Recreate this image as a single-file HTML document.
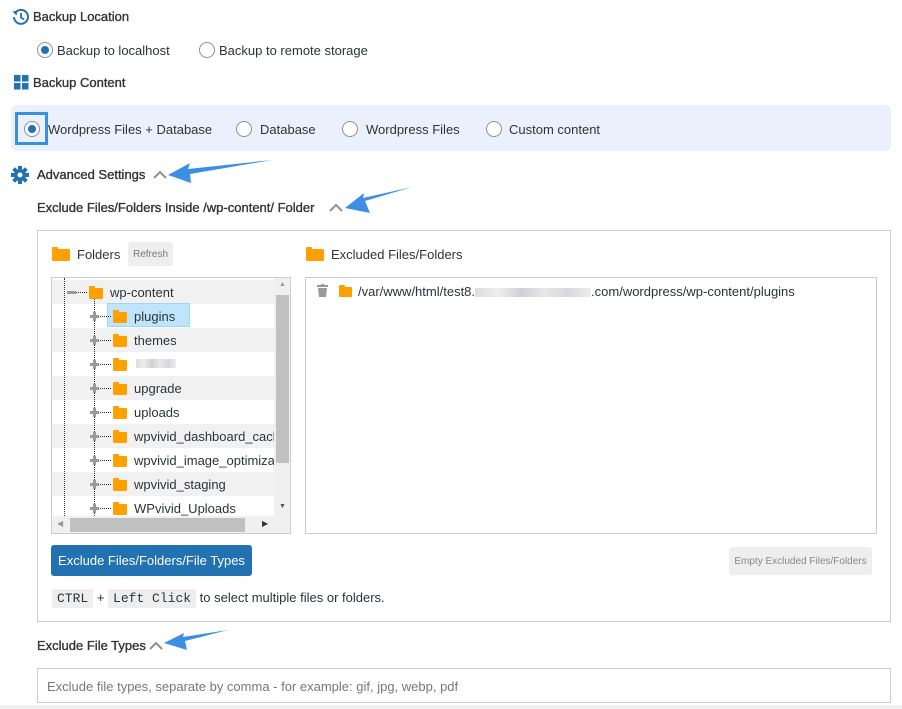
<!DOCTYPE html>
<html><head><meta charset="utf-8"><style>
*{box-sizing:border-box;margin:0;padding:0}
body{width:902px;height:709px;background:#fff;font-family:"Liberation Sans",sans-serif;font-size:13px;color:#2c3338;position:relative;overflow:hidden}
.a{position:absolute;white-space:nowrap}
.r{position:absolute;width:16px;height:16px;border:1px solid #8c8f94;border-radius:50%;background:#fff}
.r.on::after{content:"";position:absolute;left:3px;top:3px;width:8px;height:8px;border-radius:50%;background:#2271b1}
.b{color:#333;-webkit-text-stroke:0.35px #333}
.row{position:absolute;left:0;width:222px;height:24px}
.fo{position:absolute;width:14px;height:11px;background:#ffa000;border-radius:1px}
.fo::before{content:"";position:absolute;left:0;top:-2px;width:6px;height:3px;background:#ffa000;border-radius:1px 1px 0 0}
.kbd{background:#eee;font-family:"Liberation Mono",monospace;font-size:13px;padding:2px 5px}
.blur{display:inline-block;height:9px;background:linear-gradient(90deg,#ddd,#eee,#cfcfd8,#e8e8e8,#d6d6dd,#eee);vertical-align:middle}
.btn{display:flex;align-items:center;justify-content:center}
</style></head><body>
<svg class="a" style="left:12px;top:8px" width="18" height="18" viewBox="0 0 18 18"><path d="M3.5 4.5A7 7 0 1 1 2 9" fill="none" stroke="#2271b1" stroke-width="2"/><path d="M0.5 3.5L4.5 7.5L5.5 2.5z" fill="#2271b1"/><path d="M9 5v4.5l3 2" fill="none" stroke="#2271b1" stroke-width="1.8"/></svg>
<div class="a b" style="left:33px;top:9px">Backup Location</div>
<div class="r on" style="left:37px;top:42px"></div><div class="a" style="left:57px;top:43px">Backup to localhost</div>
<div class="r" style="left:199px;top:42px"></div><div class="a" style="left:219px;top:43px">Backup to remote storage</div>
<svg class="a" style="left:14px;top:75px" width="15" height="15"><rect x="0" y="0" width="6.5" height="6.5" fill="#2271b1"/><rect x="8" y="0" width="6.5" height="6.5" fill="#2271b1"/><rect x="0" y="8" width="6.5" height="6.5" fill="#2271b1"/><rect x="8" y="8" width="6.5" height="6.5" fill="#2271b1"/></svg>
<div class="a b" style="left:33px;top:75px">Backup Content</div>
<div class="a" style="left:11px;top:105px;width:880px;height:46px;background:#ebf1fc;border-radius:6px"></div>
<div class="a" style="left:15px;top:112px;width:33px;height:33px;border:3px solid #3b8fe0"></div>
<div class="r on" style="left:24px;top:121px"></div><div class="a" style="left:48px;top:122px">Wordpress Files + Database</div>
<div class="r" style="left:236px;top:121px"></div><div class="a" style="left:260px;top:122px">Database</div>
<div class="r" style="left:342px;top:121px"></div><div class="a" style="left:366px;top:122px">Wordpress Files</div>
<div class="r" style="left:486px;top:121px"></div><div class="a" style="left:509px;top:122px">Custom content</div>
<svg class="a" style="left:11px;top:166px" width="18" height="18" viewBox="0 0 18 18"><g fill="#2271b1"><circle cx="9" cy="9" r="6"/><rect x="7" y="0" width="4" height="18"/><rect x="0" y="7" width="18" height="4"/><rect x="7" y="0" width="4" height="18" transform="rotate(45 9 9)"/><rect x="7" y="0" width="4" height="18" transform="rotate(-45 9 9)"/></g><circle cx="9" cy="9" r="2.5" fill="#fff"/></svg>
<div class="a b" style="left:37px;top:167px">Advanced Settings</div>
<svg class="a" style="left:0;top:0" width="902" height="709">
<g fill="none" stroke="#8c8f94" stroke-width="2"><path d="M154 178l6-6 6 6"/><path d="M330 211l6-6 6 6"/><path d="M150 649l6-6 6 6"/></g>
<g fill="#3d8fe6"><path d="M168 175L190 163L188 169L272 160L190 174L191 183z"/><path d="M345 208L364 193L363 198L412 187L365 201L370 213z"/><path d="M164 643L184 633L183 637L228 630L185 641L187 650z"/></g>
</svg>
<div class="a b" style="left:37px;top:200px">Exclude Files/Folders Inside /wp-content/ Folder</div>
<div class="a" style="left:37px;top:230px;width:854px;height:392px;border:1px solid #ccc"></div>
<div class="fo" style="left:52px;top:249px;width:18px;height:12px"></div>
<div class="a" style="left:77px;top:247px;color:#333">Folders</div>
<div class="a btn" style="left:128px;top:242px;width:45px;height:24px;background:#eee;border-radius:3px;font-size:10px;color:#777">Refresh</div>
<div class="a" style="left:51px;top:277px;width:240px;height:257px;border:1px solid #ccc;overflow:hidden">
 <div style="position:absolute;left:0;top:2px;width:222px">
  <div class="row" style="top:0;background:#f1f1f1"></div>
  <div class="row" style="top:48px;background:#f1f1f1"></div>
  <div class="row" style="top:96px;background:#f1f1f1"></div>
  <div class="row" style="top:144px;background:#f1f1f1"></div>
  <div class="row" style="top:192px;background:#f1f1f1"></div>
 </div>
 <div class="a" style="left:12px;top:0;height:240px;border-left:1px dotted #333"></div>
 <div class="a" style="left:42px;top:20px;height:220px;border-left:1px dotted #333"></div>
 <div class="a" style="left:15px;top:14px;width:20px;border-top:1px dotted #333"></div>
 <div class="a" style="left:15px;top:13px;width:9px;height:3px;background:#999"></div>
 <div class="fo" style="left:37px;top:10px"></div><div class="a" style="left:58px;top:7px">wp-content</div>
 <div class="a" style="left:55px;top:25px;width:83px;height:24px;background:#bee5fb;border:1px solid #9dd6f8"></div>
 <div id="t"></div>
 <div class="a" style="left:222px;top:0;width:17px;height:238px;background:#f0f0f0"></div>
 <div class="a" style="left:224px;top:17px;width:13px;height:168px;background:#c1c1c1"></div>
 <div class="a" style="left:227px;top:3px;font-size:7px;color:#999">▲</div>
 <div class="a" style="left:227px;top:225px;font-size:7px;color:#555">▼</div>
 <div class="a" style="left:0;top:238px;width:239px;height:18px;background:#f0f0f0"></div>
 <div class="a" style="left:18px;top:240px;width:175px;height:14px;background:#c1c1c1"></div>
 <div class="a" style="left:5px;top:241px;font-size:8px;color:#999">◀</div>
 <div class="a" style="left:210px;top:241px;font-size:8px;color:#333">▶</div>
</div>
<script>
var n=["plugins","themes","","upgrade","uploads","wpvivid_dashboard_cache","wpvivid_image_optimization","wpvivid_staging","WPvivid_Uploads"],h="";
for(var i=0;i<n.length;i++){var y=26+24*i;
h+='<div class="a" style="left:42px;top:'+(y+12)+'px;width:17px;border-top:1px dotted #333"></div>';
h+='<div class="a" style="left:38px;top:'+(y+11)+'px;width:9px;height:3px;background:#999"></div><div class="a" style="left:41px;top:'+(y+8)+'px;width:3px;height:9px;background:#999"></div>';
h+='<div class="fo" style="left:61px;top:'+(y+8)+'px"></div>';
h+=n[i]?'<div class="a" style="left:82px;top:'+(y+5)+'px">'+n[i]+'</div>':'<div class="a blur" style="left:84px;top:'+(y+7)+'px;width:40px"></div>';}
document.getElementById("t").outerHTML=h;
</script>
<div class="fo" style="left:306px;top:249px;width:18px;height:12px"></div>
<div class="a" style="left:331px;top:247px;color:#333">Excluded Files/Folders</div>
<div class="a" style="left:305px;top:277px;width:572px;height:257px;border:1px solid #ccc"></div>
<svg class="a" style="left:317px;top:284px" width="11" height="13"><rect x="0" y="1" width="11" height="2" fill="#999"/><rect x="4" y="0" width="3" height="2" fill="#999"/><path d="M1 4h9l-1 9H2z" fill="#999"/></svg>
<div class="fo" style="left:339px;top:287px;width:13px;height:10px"></div>
<div class="a" style="left:358px;top:284px">/var/www/html/test8.<span class="blur" style="width:116px"></span>.com/wordpress/wp-content/plugins</div>
<div class="a btn" style="left:51px;top:545px;width:201px;height:31px;background:#2271b1;border-radius:3px;color:#fff">Exclude Files/Folders/File Types</div>
<div class="a btn" style="left:729px;top:547px;width:143px;height:28px;background:#eee;border-radius:3px;color:#888;font-size:10px">Empty Excluded Files/Folders</div>
<div class="a" style="left:52px;top:590px"><span class="kbd">CTRL</span> + <span class="kbd">Left Click</span> to select multiple files or folders.</div>
<div class="a b" style="left:37px;top:638px">Exclude File Types</div>
<div class="a" style="left:37px;top:668px;width:854px;height:35px;border:1px solid #ccc;color:#777;padding:10px 0 0 9px">Exclude file types, separate by comma - for example: gif, jpg, webp, pdf</div>
<div class="a" style="left:0;top:705px;width:902px;height:4px;background:#f0f0f1"></div>
</body></html>
